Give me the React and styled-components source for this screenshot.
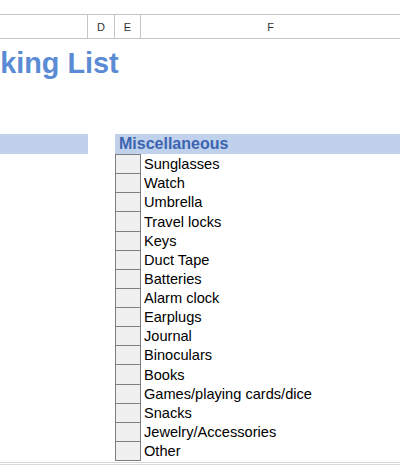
import React from 'react';
import styled, { createGlobalStyle } from 'styled-components';

const GlobalStyle = createGlobalStyle`
  html, body {
    margin: 0;
    padding: 0;
    background: #fff;
    overflow: hidden;
  }
  body {
    font-family: "Liberation Sans", Arial, sans-serif;
  }
`;

const COLS = '88px 27px 26px 1fr';
const ROW_H = 19.125;

const S_Page = styled.div`
  width: 400px;
  height: 466px;
  overflow: hidden;
  padding-top: 14px;
  box-sizing: border-box;
  position: relative;
`;

const S_HeaderRow = styled.div`
  display: grid;
  grid-template-columns: ${COLS};
  height: 25px;
  border-top: 1px solid #c6c6c6;
  border-bottom: 1px solid #c6c6c6;
  box-sizing: border-box;
`;

const S_ColHead = styled.div`
  display: flex;
  align-items: center;
  justify-content: center;
  font-size: 11px;
  color: #333;
  border-right: ${(p) => (p.$last ? 'none' : '1px solid #c6c6c6')};
`;

const S_TitleArea = styled.div`
  height: 95px;
  padding-top: 7px;
  box-sizing: border-box;
  overflow: hidden;
`;

const S_Title = styled.h1`
  margin: 0 0 0 -51px;
  font-size: 28.8px;
  line-height: 34px;
  font-weight: bold;
  color: #5b8bd4;
  white-space: nowrap;
`;

const S_Grid = styled.div`
  display: grid;
  grid-template-columns: ${COLS};
`;

const S_Band = styled.div`
  grid-column: ${(p) => p.$col};
  height: 20px;
  background: #c0d1ec;
  font-size: 16px;
  font-weight: bold;
  color: #3c64b1;
  line-height: 20px;
  padding-left: 4px;
  box-sizing: border-box;
  white-space: nowrap;
`;

const S_Check = styled.div`
  grid-column: 3;
  height: ${(p) => (p.$first ? ROW_H + 1 : ROW_H)}px;
  background: #f0f0f0;
  border: 1px solid #7f7f7f;
  border-top: ${(p) => (p.$first ? '1px solid #7f7f7f' : 'none')};
  box-sizing: border-box;
`;

const S_Item = styled.div`
  grid-column: 4;
  height: ${(p) => (p.$first ? ROW_H + 1 : ROW_H)}px;
  display: flex;
  align-items: flex-end;
  padding-left: 3px;
  padding-bottom: 2px;
  box-sizing: border-box;
  font-size: 14.6px;
  color: #000;
  white-space: nowrap;
`;

const S_Footer = styled.div`
  position: absolute;
  left: 0;
  right: 0;
  top: 462px;
  height: 3px;
  border-top: 1px solid #d9d9d9;
  border-bottom: 1px solid #d9d9d9;
  box-sizing: border-box;
`;

const items = [
  'Sunglasses',
  'Watch',
  'Umbrella',
  'Travel locks',
  'Keys',
  'Duct Tape',
  'Batteries',
  'Alarm clock',
  'Earplugs',
  'Journal',
  'Binoculars',
  'Books',
  'Games/playing cards/dice',
  'Snacks',
  'Jewelry/Accessories',
  'Other',
];

export default function App() {
  return (
    <>
      <GlobalStyle />
      <S_Page>
        <S_HeaderRow>
          <S_ColHead />
          <S_ColHead>D</S_ColHead>
          <S_ColHead>E</S_ColHead>
          <S_ColHead $last>F</S_ColHead>
        </S_HeaderRow>
        <S_TitleArea>
          <S_Title>Packing List</S_Title>
        </S_TitleArea>
        <S_Grid>
          <S_Band $col="1" />
          <S_Band $col="3 / span 2">Miscellaneous</S_Band>
          {items.map((name, i) => (
            <React.Fragment key={name}>
              <S_Check $first={i === 0} />
              <S_Item $first={i === 0}>{name}</S_Item>
            </React.Fragment>
          ))}
        </S_Grid>
        <S_Footer />
      </S_Page>
    </>
  );
}
